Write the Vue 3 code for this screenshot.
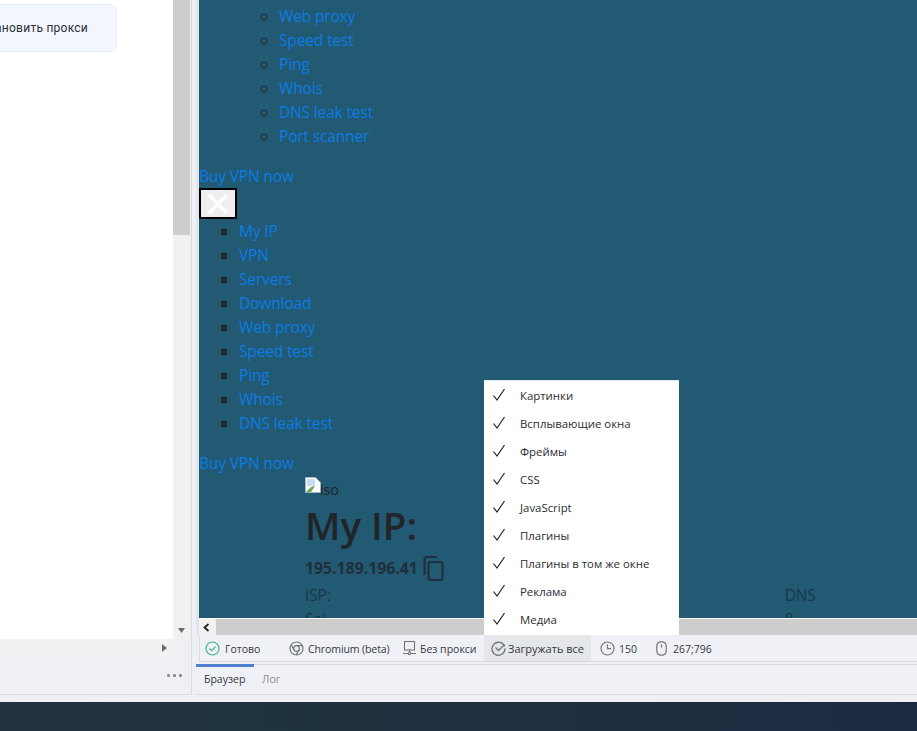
<script setup>
const circleLinks = ['Web proxy', 'Speed test', 'Ping', 'Whois', 'DNS leak test', 'Port scanner']
const squareLinks = ['My IP', 'VPN', 'Servers', 'Download', 'Web proxy', 'Speed test', 'Ping', 'Whois', 'DNS leak test']
const menuItems = ['Картинки', 'Всплывающие окна', 'Фреймы', 'CSS', 'JavaScript', 'Плагины', 'Плагины в том же окне', 'Реклама', 'Медиа']
</script>

<template>
  <div class="screen">
    <div class="window">
      <aside class="left">
        <div class="left-top">
          <div class="left-view">
            <div class="proxy-btn"><span>Установить прокси</span></div>
          </div>
          <div class="vscroll">
            <div class="vthumb"></div>
            <div class="vtrack"></div>
            <svg class="arrow-down" width="7" height="5" viewBox="0 0 7 5"><path d="M0 0h7L3.5 5z" fill="#6d6d6d" /></svg>
          </div>
        </div>
        <div class="left-hscroll">
          <svg width="5" height="8" viewBox="0 0 5 8"><path d="M0 0l5 4-5 4z" fill="#6d6d6d" /></svg>
        </div>
        <div class="left-foot"><span class="dots"><i></i><i></i><i></i></span></div>
      </aside>

      <main class="right">
        <div class="browser">
          <div class="page">
            <ul class="outer">
              <li class="nested">
                <ul class="circle">
                  <li v-for="l in circleLinks" :key="l"><a>{{ l }}</a></li>
                </ul>
              </li>
            </ul>
            <a class="line">Buy VPN now</a>
            <div class="closebox">
              <svg width="24" height="24" viewBox="0 0 24 24"><path d="M3 3l18 18M21 3L3 21" stroke="#fff" stroke-width="3.4" /></svg>
            </div>
            <ul class="square">
              <li v-for="l in squareLinks" :key="l"><a>{{ l }}</a></li>
            </ul>
            <a class="line">Buy VPN now</a>
            <div class="ipblock">
              <div class="iso">
                <svg width="16" height="16" viewBox="0 0 16 16">
                  <path d="M.5.5h10l5 5v10H.5z" fill="#fff" stroke="#a9b3bd" />
                  <path d="M2 2h8v7H2z" fill="#c9dcf5" />
                  <path d="M1 15l5-5 4-1-4 6z" fill="#6aa84f" />
                </svg>
                <span>iso</span>
              </div>
              <h1>My IP:</h1>
              <div class="ip">
                <b>195.189.196.41</b>
                <svg width="24" height="25" viewBox="0 0 24 25" fill="none" stroke="#212f3d" stroke-width="2.200"><path d="M2.500 19V3.500A2.500 2.500 0 0 1 5 1H15" /><rect x="6.500" y="6" width="14" height="18" rx="2" /></svg>
              </div>
              <div class="infos">
                <div class="info"><span>ISP:</span><span class="val">Sol</span></div>
                <div class="info dns"><span>DNS</span><span class="val">8</span></div>
              </div>
            </div>
          </div>
          <div class="hscroll">
            <svg width="7" height="9" viewBox="0 0 7 9"><path d="M5.500 1L1.500 4.500l4 3.500" fill="none" stroke="#222" stroke-width="1.800" /></svg>
          </div>
          <div class="menu">
            <div v-for="m in menuItems" :key="m" class="menu-item">
              <svg width="14" height="14" viewBox="0 0 14 14"><path d="M1.500 7.500L5 12 12.500 1" fill="none" stroke="#222" stroke-width="1.200" /></svg>
              <span>{{ m }}</span>
            </div>
          </div>
        </div>
        <div class="status">
          <div class="st st-ready">
            <svg width="15" height="15" viewBox="0 0 15 15" fill="none" stroke="#3cb494" stroke-width="1.200"><circle cx="7.500" cy="7.500" r="6.500" /><path d="M4.500 7.500l2.200 2.200 3.800-4" /></svg>
            <span>Готово</span>
          </div>
          <div class="st st-chrome">
            <svg width="15" height="15" viewBox="0 0 15 15" fill="none" stroke="#70767c" stroke-width="1.200"><circle cx="7.500" cy="7.500" r="6.500" /><circle cx="7.500" cy="7.500" r="2.800" /><path d="M7.500 4.700h5.800M5 8.900L2.300 4M10 8.900l-2.800 5" /></svg>
            <span>Chromium (beta)</span>
          </div>
          <div class="st st-proxy">
            <svg width="13" height="15" viewBox="0 0 13 15" fill="none" stroke="#70767c" stroke-width="1.100"><rect x="1.500" y=".5" width="10" height="8.500" /><path d="M6.500 9v3.500M0 12.500h13" /><circle cx="6.500" cy="12.500" r="1.200" fill="#fff" /></svg>
            <span>Без прокси</span>
          </div>
          <div class="st st-load">
            <svg width="15" height="15" viewBox="0 0 15 15" fill="none" stroke="#70767c" stroke-width="1.300"><path d="M13.600 5.500A6.500 6.500 0 1 0 14 7.500" /><path d="M4.500 6.500l3 3 6-6" /></svg>
            <span>Загружать все</span>
          </div>
          <div class="st st-clock">
            <svg width="15" height="15" viewBox="0 0 15 15" fill="none" stroke="#70767c" stroke-width="1.200"><circle cx="7.500" cy="7.500" r="6.500" /><path d="M7.500 3.500v4.200h3.500" /></svg>
            <span>150</span>
          </div>
          <div class="st st-mouse">
            <svg width="11" height="15" viewBox="0 0 11 15" fill="none" stroke="#70767c" stroke-width="1.200"><rect x=".8" y=".8" width="9.400" height="13.400" rx="4" /><path d="M5.500 3.500v3" /></svg>
            <span>267;796</span>
          </div>
        </div>
        <div class="tabs">
          <div class="tab active">Браузер</div>
          <div class="tab">Лог</div>
        </div>
      </main>
    </div>
    <div class="desktop"></div>
  </div>
</template>

<style scoped>
.screen {
  width: 917px;
  height: 731px;
  overflow: hidden;
  display: flex;
  flex-direction: column;
  position: relative;
  font-family: "Open Sans", "Noto Sans", sans-serif;
}
.window {
  height: 702px;
  flex: none;
  display: flex;
  background: #eff0f4;
}
.left {
  width: 191px;
  flex: none;
  display: flex;
  flex-direction: column;
  border-right: 1px solid #d9dbde;
  border-bottom: 1px solid #dcdee1;
  box-sizing: content-box;
  height: 694px;
}
.left-top {
  height: 639px;
  display: flex;
  flex: none;
}
.left-view {
  width: 173px;
  background: #fff;
  overflow: hidden;
  padding-top: 4px;
  box-sizing: border-box;
}
.proxy-btn {
  width: 117px;
  height: 48px;
  box-sizing: border-box;
  background: #f4f6fd;
  border: 1px solid #e9edf8;
  border-left: 0;
  border-radius: 0 7px 7px 0;
  display: flex;
  align-items: center;
  justify-content: flex-end;
  padding-right: 28px;
  white-space: nowrap;
  font: 12px/16px Roboto, "Noto Sans", sans-serif;
  letter-spacing: 0.25px;
  color: #2b2f36;
}
.vscroll {
  width: 17px;
  position: relative;
  display: flex;
  flex-direction: column;
  background: #f1f1f1;
}
.vthumb {
  height: 235px;
  background: #cdcdcd;
}
.vtrack {
  flex: 1;
}
.arrow-down {
  position: absolute;
  left: 5px;
  top: 628px;
}
.left-hscroll {
  height: 17px;
  width: 173px;
  background: #f1f1f1;
  display: flex;
  align-items: center;
  justify-content: flex-end;
  padding-right: 6px;
  box-sizing: border-box;
}
.left-foot {
  flex: 1;
  display: flex;
  justify-content: flex-end;
  padding: 18px 9px 0 0;
}
.dots {
  display: flex;
  gap: 3px;
  height: 3px;
}
.dots i {
  width: 3px;
  height: 3px;
  border-radius: 50%;
  background: #7b7e82;
}
.right {
  flex: 1;
  min-width: 0;
  margin-left: 4px;
  display: flex;
  flex-direction: column;
  height: 694px;
  border-bottom: 1px solid #dcdee1;
  box-sizing: content-box;
}
.browser {
  height: 635px;
  flex: none;
  position: relative;
  border-left: 3px solid #e3e5ea;
  box-sizing: border-box;
  display: flex;
  flex-direction: column;
}
.page {
  height: 618px;
  flex: none;
  overflow: hidden;
  background: #215a72;
  color: #212529;
  font-size: 15.500px;
  letter-spacing: -0.15px;
  line-height: 24px;
  padding-top: 4px;
  box-sizing: border-box;
}
a {
  color: #0d7be6;
}
.line {
  display: block;
}
ul {
  margin: 0;
  padding: 0 0 0 40px;
}
.outer {
  margin-bottom: 16px;
  list-style: none;
}
.circle {
  list-style: circle;
}
.closebox {
  width: 38px;
  height: 31px;
  box-sizing: border-box;
  border: 2px solid #000;
  background: #efefef;
  display: flex;
  align-items: center;
  justify-content: center;
}
.square {
  list-style: square;
  margin-bottom: 16px;
}
.ipblock {
  margin: 2px 0 0 106px;
  height: 141px;
}
.iso {
  height: 18px;
  display: flex;
  align-items: flex-start;
  color: #212529;
}
.iso span {
  margin: 5px 0 0 -1px;
  line-height: 16px;
  font-size: 14.500px;
}
h1 {
  margin: 6px 0 0;
  font-size: 38.500px;
  font-weight: 600;
  letter-spacing: 0;
  line-height: 48px;
  color: #212529;
}
.ip {
  display: flex;
  align-items: center;
  gap: 4px;
  height: 30px;
  margin-top: 4px;
  font-size: 15.800px;
  letter-spacing: 0;
  color: #212f3d;
}
.infos {
  display: flex;
  margin-top: 0;
}
.info {
  display: flex;
  flex-direction: column;
  color: #19384c;
}
.val {
  line-height: 24px;
}
.dns {
  margin-left: 454px;
}
.hscroll {
  height: 17px;
  flex: none;
  background: linear-gradient(to right, #f1f1f1 17px, #cdcdcd 17px);
  border-top: 1px solid #fff;
  box-sizing: border-box;
  display: flex;
  align-items: center;
}
.hscroll svg {
  margin-left: 4px;
}
.menu {
  position: absolute;
  left: 285px;
  top: 380px;
  width: 195px;
  height: 255px;
  box-sizing: border-box;
  padding-top: 1px;
  background: #fff;
  border-top: 1px solid #dbe6ee;
}
.menu-item {
  height: 28px;
  display: flex;
  align-items: center;
  padding-left: 8px;
  gap: 14px;
  font-size: 11.400px;
  color: #2a2d33;
  padding-bottom: 2px;
  box-sizing: border-box;
}
.status {
  height: 27px;
  flex: none;
  display: flex;
  align-items: stretch;
  border-left: 1px solid #d9dbde;
  border-bottom: 1px solid #d6d8dc;
  margin-left: 3px;
  background: #f0f1f6;
  font-size: 10.500px;
  color: #34383f;
  box-sizing: border-box;
}
.st {
  display: flex;
  align-items: center;
  gap: 5px;
  padding-top: 1px;
  box-sizing: border-box;
}
.st-ready {
  margin-left: 5px;
  width: 84px;
  flex: none;
}
.st-chrome {
  width: 114px;
  flex: none;
  gap: 4px;
}
.st-chrome span {
  letter-spacing: -0.1px;
}
.st-proxy {
  width: 81px;
  flex: none;
  gap: 4px;
}
.st-load {
  width: 107px;
  flex: none;
  background: #e4e6ea;
  padding-left: 7px;
  box-sizing: border-box;
  gap: 2px;
  font-size: 11px;
}
.st-clock {
  margin-left: 9px;
  width: 56px;
  flex: none;
  gap: 4px;
}
.st-mouse {
  flex: none;
  gap: 6px;
}
.tabs {
  flex: 1;
  margin-top: 2px;
  border-top: 1px solid #d6d8dc;
  display: flex;
  background: #f0f1f6;
  font-size: 10.500px;
}
.tab {
  padding: 0 0 0 8px;
  width: 58px;
  box-sizing: border-box;
  line-height: 28px;
  color: #8a8d92;
}
.tab.active {
  color: #34383f;
  box-shadow: inset 0 2px 0 #4f7fd0, 0 -1px 0 #4f7fd0;
  line-height: 29px;
}
.desktop {
  flex: 1;
  background: linear-gradient(to right, #21343f, #1f3140 50%, #1c2a40);
}
</style>
